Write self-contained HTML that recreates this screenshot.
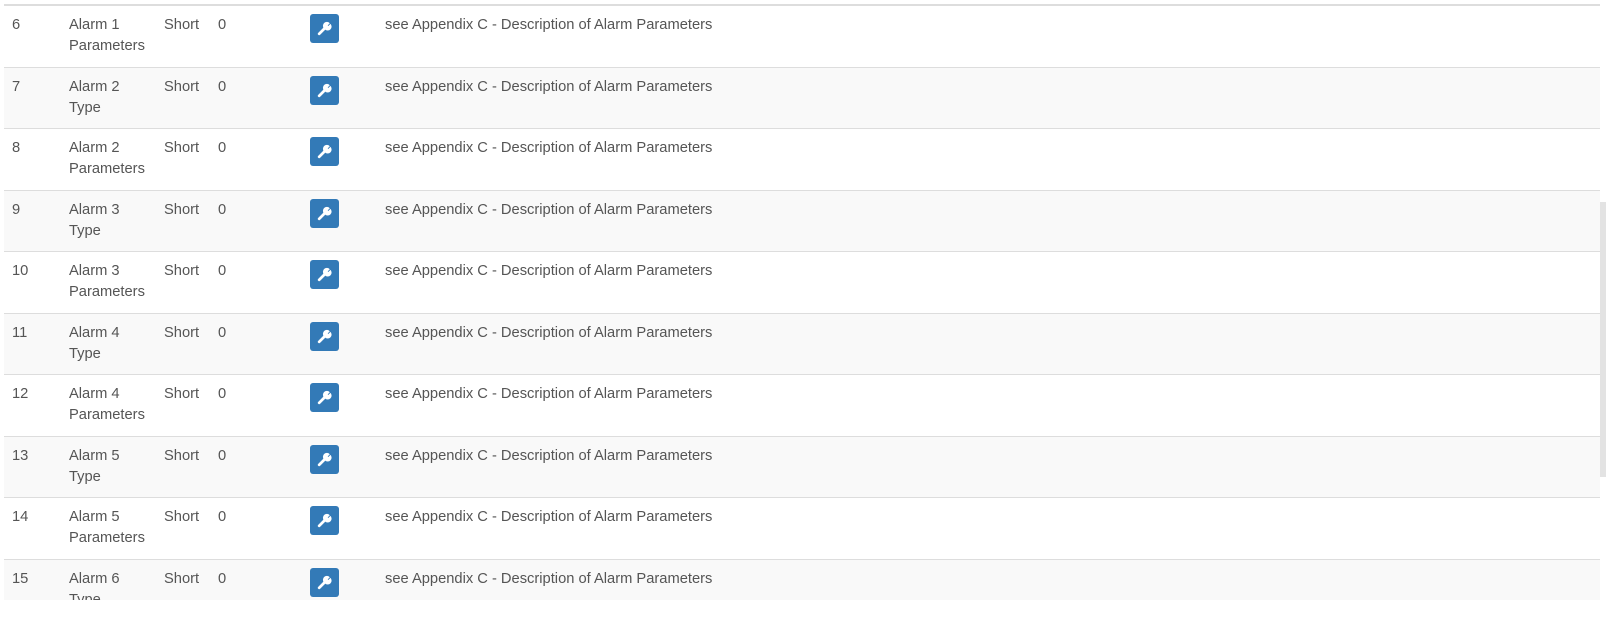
<!DOCTYPE html>
<html><head><meta charset="utf-8"><style>
html,body{margin:0;padding:0;background:#fff;width:1606px;height:621px;overflow:hidden}
.wrap{position:absolute;left:4px;top:4px;width:1596px;height:596px;overflow:hidden;border-top:2px solid #ddd;box-sizing:border-box}
.row{position:relative;height:61.5px;border-bottom:1px solid #ddd;box-sizing:border-box;font-family:"Liberation Sans",Arial,sans-serif;font-size:14.7px;line-height:21px;color:#555}
.row:nth-child(even){background:#f9f9f9}
.row span{position:absolute;top:9px}
.n{left:8px}.a{left:65px;width:95px}.s{left:160px}.z{left:214px}.d{left:381px}
.b{position:absolute;left:306px;top:8px;width:29px;height:29px;background:#337ab7;border-radius:3px}
.b svg{position:absolute;left:6px;top:6px}
.sb{position:absolute;left:1600px;top:202px;width:6px;height:275px;background:#e3e3e3}
</style></head><body>
<div class="wrap">
<div class="row"><span class="n">6</span><span class="a">Alarm 1<br>Parameters</span><span class="s">Short</span><span class="z">0</span><div class="b"><svg width="17" height="17" viewBox="0 0 16 16"><path d="M3 13 L8 8" stroke="#fff" stroke-width="2.6" stroke-linecap="round"/><path d="M7.5 8 A3.6 3.6 0 0 1 13 3 L11 5 L11.6 5.6 L13.6 3.6 A3.6 3.6 0 0 1 8.4 8.8 Z" fill="#fff"/></svg></div><span class="d">see Appendix C - Description of Alarm Parameters</span></div>
<div class="row"><span class="n">7</span><span class="a">Alarm 2<br>Type</span><span class="s">Short</span><span class="z">0</span><div class="b"><svg width="17" height="17" viewBox="0 0 16 16"><path d="M3 13 L8 8" stroke="#fff" stroke-width="2.6" stroke-linecap="round"/><path d="M7.5 8 A3.6 3.6 0 0 1 13 3 L11 5 L11.6 5.6 L13.6 3.6 A3.6 3.6 0 0 1 8.4 8.8 Z" fill="#fff"/></svg></div><span class="d">see Appendix C - Description of Alarm Parameters</span></div>
<div class="row"><span class="n">8</span><span class="a">Alarm 2<br>Parameters</span><span class="s">Short</span><span class="z">0</span><div class="b"><svg width="17" height="17" viewBox="0 0 16 16"><path d="M3 13 L8 8" stroke="#fff" stroke-width="2.6" stroke-linecap="round"/><path d="M7.5 8 A3.6 3.6 0 0 1 13 3 L11 5 L11.6 5.6 L13.6 3.6 A3.6 3.6 0 0 1 8.4 8.8 Z" fill="#fff"/></svg></div><span class="d">see Appendix C - Description of Alarm Parameters</span></div>
<div class="row"><span class="n">9</span><span class="a">Alarm 3<br>Type</span><span class="s">Short</span><span class="z">0</span><div class="b"><svg width="17" height="17" viewBox="0 0 16 16"><path d="M3 13 L8 8" stroke="#fff" stroke-width="2.6" stroke-linecap="round"/><path d="M7.5 8 A3.6 3.6 0 0 1 13 3 L11 5 L11.6 5.6 L13.6 3.6 A3.6 3.6 0 0 1 8.4 8.8 Z" fill="#fff"/></svg></div><span class="d">see Appendix C - Description of Alarm Parameters</span></div>
<div class="row"><span class="n">10</span><span class="a">Alarm 3<br>Parameters</span><span class="s">Short</span><span class="z">0</span><div class="b"><svg width="17" height="17" viewBox="0 0 16 16"><path d="M3 13 L8 8" stroke="#fff" stroke-width="2.6" stroke-linecap="round"/><path d="M7.5 8 A3.6 3.6 0 0 1 13 3 L11 5 L11.6 5.6 L13.6 3.6 A3.6 3.6 0 0 1 8.4 8.8 Z" fill="#fff"/></svg></div><span class="d">see Appendix C - Description of Alarm Parameters</span></div>
<div class="row"><span class="n">11</span><span class="a">Alarm 4<br>Type</span><span class="s">Short</span><span class="z">0</span><div class="b"><svg width="17" height="17" viewBox="0 0 16 16"><path d="M3 13 L8 8" stroke="#fff" stroke-width="2.6" stroke-linecap="round"/><path d="M7.5 8 A3.6 3.6 0 0 1 13 3 L11 5 L11.6 5.6 L13.6 3.6 A3.6 3.6 0 0 1 8.4 8.8 Z" fill="#fff"/></svg></div><span class="d">see Appendix C - Description of Alarm Parameters</span></div>
<div class="row"><span class="n">12</span><span class="a">Alarm 4<br>Parameters</span><span class="s">Short</span><span class="z">0</span><div class="b"><svg width="17" height="17" viewBox="0 0 16 16"><path d="M3 13 L8 8" stroke="#fff" stroke-width="2.6" stroke-linecap="round"/><path d="M7.5 8 A3.6 3.6 0 0 1 13 3 L11 5 L11.6 5.6 L13.6 3.6 A3.6 3.6 0 0 1 8.4 8.8 Z" fill="#fff"/></svg></div><span class="d">see Appendix C - Description of Alarm Parameters</span></div>
<div class="row"><span class="n">13</span><span class="a">Alarm 5<br>Type</span><span class="s">Short</span><span class="z">0</span><div class="b"><svg width="17" height="17" viewBox="0 0 16 16"><path d="M3 13 L8 8" stroke="#fff" stroke-width="2.6" stroke-linecap="round"/><path d="M7.5 8 A3.6 3.6 0 0 1 13 3 L11 5 L11.6 5.6 L13.6 3.6 A3.6 3.6 0 0 1 8.4 8.8 Z" fill="#fff"/></svg></div><span class="d">see Appendix C - Description of Alarm Parameters</span></div>
<div class="row"><span class="n">14</span><span class="a">Alarm 5<br>Parameters</span><span class="s">Short</span><span class="z">0</span><div class="b"><svg width="17" height="17" viewBox="0 0 16 16"><path d="M3 13 L8 8" stroke="#fff" stroke-width="2.6" stroke-linecap="round"/><path d="M7.5 8 A3.6 3.6 0 0 1 13 3 L11 5 L11.6 5.6 L13.6 3.6 A3.6 3.6 0 0 1 8.4 8.8 Z" fill="#fff"/></svg></div><span class="d">see Appendix C - Description of Alarm Parameters</span></div>
<div class="row"><span class="n">15</span><span class="a">Alarm 6<br>Type</span><span class="s">Short</span><span class="z">0</span><div class="b"><svg width="17" height="17" viewBox="0 0 16 16"><path d="M3 13 L8 8" stroke="#fff" stroke-width="2.6" stroke-linecap="round"/><path d="M7.5 8 A3.6 3.6 0 0 1 13 3 L11 5 L11.6 5.6 L13.6 3.6 A3.6 3.6 0 0 1 8.4 8.8 Z" fill="#fff"/></svg></div><span class="d">see Appendix C - Description of Alarm Parameters</span></div>
</div>
<div class="sb"></div>
</body></html>
